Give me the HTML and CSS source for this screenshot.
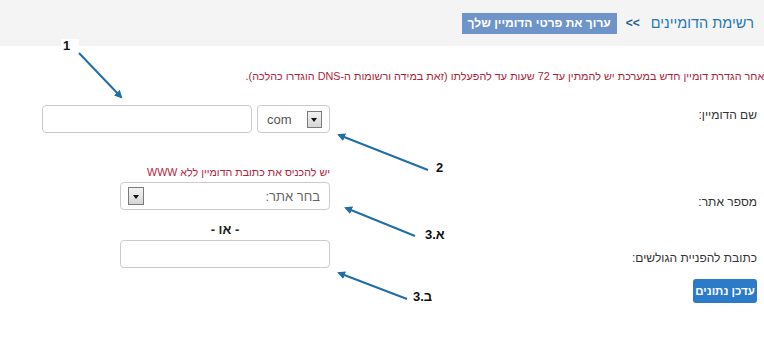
FILE: index.html
```html
<!DOCTYPE html>
<html lang="he" dir="rtl">
<head>
<meta charset="utf-8">
<title>ערוך את פרטי הדומיין שלך</title>
<link rel="stylesheet" href="styles.css">
</head>
<body>
<div class="page">
  <header class="topbar">
    <a class="crumb-link" href="#">רשימת הדומיינים</a>
    <span class="crumb-sep">&lt;&lt;</span>
    <span class="crumb-current">ערוך את פרטי הדומיין שלך</span>
  </header>

  <p class="note">לאחר הגדרת דומיין חדש במערכת יש להמתין עד 72 שעות עד להפעלתו (זאת במידה ורשומות ה-DNS הוגדרו כהלכה).</p>

  <form class="form">
    <div class="row row-domain">
      <label class="label">שם הדומיין:</label>
      <div class="field field-inline">
        <div class="select select-tld"><span class="select-text">com</span><span class="select-arrow"></span></div>
        <div class="input input-domain"></div>
      </div>
    </div>

    <div class="row row-site">
      <label class="label label-bottom">מספר אתר:</label>
      <div class="field">
        <div class="hint">יש להכניס את כתובת הדומיין ללא WWW</div>
        <div class="select select-wide"><span class="select-text muted">בחר אתר:</span><span class="select-arrow"></span></div>
      </div>
    </div>

    <div class="row row-url">
      <label class="label label-bottom label-url">כתובת להפניית הגולשים:</label>
      <div class="field">
        <div class="or">- או -</div>
        <div class="input input-wide"></div>
      </div>
    </div>

    <div class="row row-submit">
      <div class="label"><button type="button" class="btn">עדכן נתונים</button></div>
    </div>
  </form>

  <div class="annotations">
    <svg class="arrows" width="764" height="346" viewBox="0 0 764 346">
      <defs>
        <marker id="head" markerWidth="8" markerHeight="8" refX="6" refY="4" orient="auto" markerUnits="userSpaceOnUse">
          <path d="M0,0 L8,4 L0,8 Z" fill="#1f6ea6"/>
        </marker>
      </defs>
      <g stroke="#1f6ea6" stroke-width="2" fill="none">
        <line x1="79" y1="53" x2="121" y2="97" marker-end="url(#head)"/>
        <line x1="428" y1="170" x2="339" y2="135" marker-end="url(#head)"/>
        <line x1="415" y1="236" x2="346" y2="208" marker-end="url(#head)"/>
        <line x1="407" y1="299" x2="339" y2="273" marker-end="url(#head)"/>
      </g>
    </svg>
    <span class="tag tag-1" dir="ltr">1</span>
    <span class="tag tag-2" dir="ltr">2</span>
    <span class="tag tag-3a" dir="ltr">3.א</span>
    <span class="tag tag-3b" dir="ltr">3.ב</span>
  </div>
</div>
</body>
</html>
```

FILE: styles.css
```css
html, body {
  margin: 0;
  padding: 0;
  background: #ffffff;
}

body {
  font-family: "Liberation Sans", Arial, sans-serif;
  font-size: 12px;
  color: #333333;
  overflow: hidden;
}

.page {
  position: relative;
  width: 764px;
  height: 346px;
  overflow: hidden;
}

/* ---------- header / breadcrumb ---------- */
.topbar {
  height: 46px;
  background: #f4f4f4;
  display: flex;
  align-items: center;
  padding-right: 10px;
}

.crumb-link {
  color: #2379b6;
  text-decoration: none;
  font-size: 14.5px;
}

.crumb-sep {
  color: #2a5f94;
  font-weight: bold;
  font-size: 12px;
  margin-right: 11px;
  direction: ltr;
}

.crumb-current {
  margin-right: 9px;
  background: #6f94c9;
  color: #ffffff;
  font-weight: bold;
  font-size: 12px;
  line-height: 21px;
  padding: 0 6px;
}

/* ---------- note ---------- */
.note {
  margin: 22px -6px 0 0;
  line-height: 16px;
  font-size: 10.84px;
  color: #ad2335;
  white-space: nowrap;
}

/* ---------- form ---------- */
.form {
  margin-top: 21px;
  padding-right: 7px;
}

.row {
  display: flex;
}

.label {
  width: 427px;
  flex: none;
  line-height: 16px;
  font-size: 12px;
  color: #333333;
}

.row-domain .label {
  padding-top: 2px;
}

.label-bottom {
  align-self: flex-end;
}

.label-url {
  margin-bottom: 2px;
}

.field {
  display: flex;
  flex-direction: column;
  align-items: flex-start;
}

.field-inline {
  flex-direction: row;
  gap: 5px;
}

.input,
.select {
  box-sizing: border-box;
  height: 28px;
  border: 1px solid #cccccc;
  border-radius: 4px;
  background: #ffffff;
}

.input-domain {
  width: 210px;
}

.select {
  display: flex;
  align-items: center;
  justify-content: space-between;
  padding: 0 9px 0 7px;
}

.select-tld {
  width: 73px;
  direction: ltr;
  padding: 0 7px 0 9px;
}

.select-wide,
.input-wide {
  width: 210px;
}

.select-text {
  font-size: 13px;
  color: #555555;
}

.select-text.muted {
  color: #666666;
}

.select-arrow {
  box-sizing: border-box;
  width: 15px;
  height: 17px;
  border: 1px solid #7a7a7a;
  background: linear-gradient(#f3f3f3, #d6d6d6);
  position: relative;
}

.select-arrow::after {
  content: "";
  position: absolute;
  left: 3px;
  top: 6px;
  border-left: 3.5px solid transparent;
  border-right: 3.5px solid transparent;
  border-top: 4px solid #111111;
}

.select-wide .select-arrow {
  width: 16px;
  height: 18px;
}

.select-wide .select-arrow::after {
  left: 4px;
  top: 7px;
}

.row-site {
  margin-top: 32px;
}

.hint {
  line-height: 14px;
  font-size: 10.7px;
  color: #b3243a;
  margin-bottom: 3px;
}

.row-url {
  margin-top: 13px;
}

.or {
  width: 210px;
  text-align: center;
  font-weight: bold;
  font-size: 13px;
  line-height: 14px;
  color: #222222;
  margin-bottom: 3px;
}

.row-submit {
  margin-top: 11px;
}

.btn {
  width: 64px;
  height: 24px;
  border: none;
  border-radius: 3px;
  background: #2b7bc9;
  color: #ffffff;
  font-family: "Liberation Sans", Arial, sans-serif;
  font-weight: bold;
  font-size: 11.5px;
  padding: 0;
  cursor: pointer;
}

/* ---------- annotation overlay ---------- */
.annotations {
  position: absolute;
  inset: 0;
  pointer-events: none;
}

.arrows {
  position: absolute;
  left: 0;
  top: 0;
}

.tag {
  position: absolute;
  font-family: "Liberation Sans", Arial, sans-serif;
  font-weight: bold;
  font-size: 13px;
  line-height: 13px;
  color: #111111;
  text-align: left;
}

.tag-1 {
  left: 61px;
  top: 39px;
  width: 18px;
  padding-left: 2px;
  box-sizing: border-box;
  background: #ffffff;
}

.tag-2 {
  left: 436px;
  top: 161px;
}

.tag-3a {
  left: 425px;
  top: 228px;
}

.tag-3b {
  left: 413px;
  top: 290px;
}
```
